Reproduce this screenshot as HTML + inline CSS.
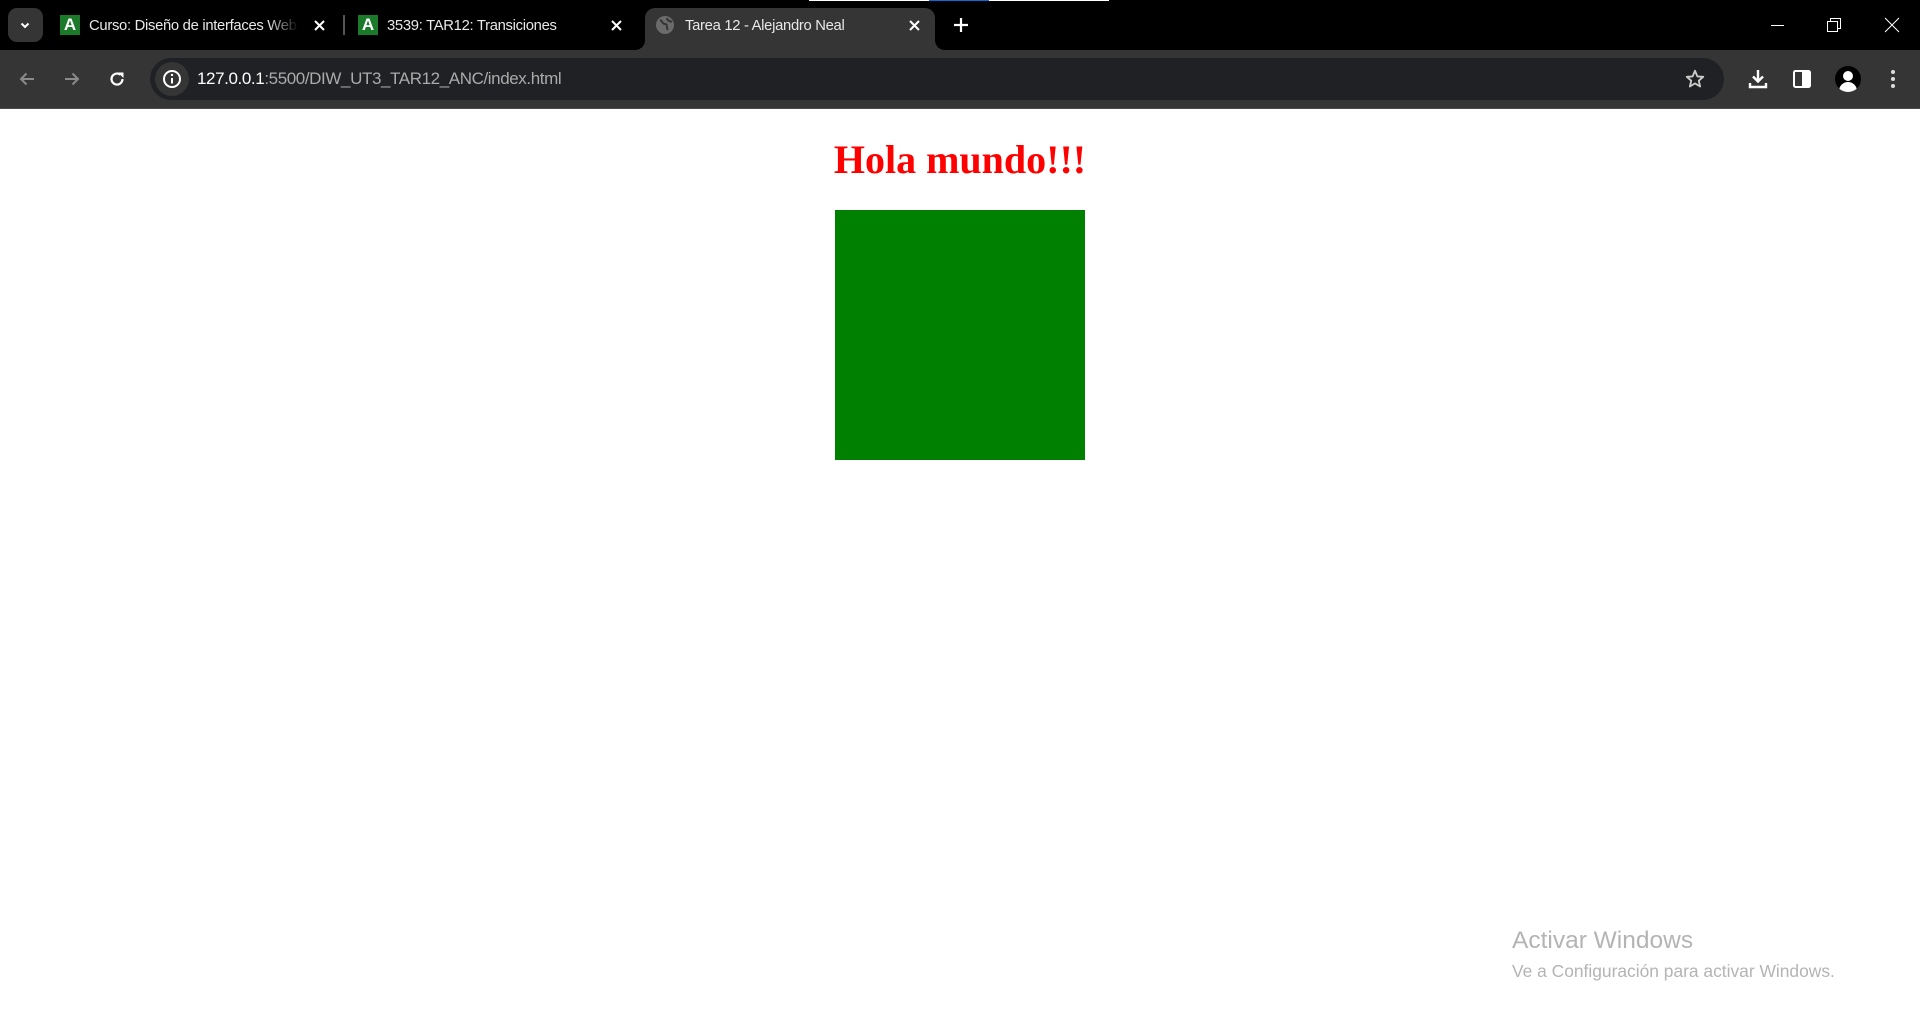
<!DOCTYPE html>
<html><head><meta charset="utf-8"><style>
*{margin:0;padding:0;box-sizing:border-box}
body{width:1920px;height:1030px;overflow:hidden;background:#fff;position:relative;font-family:"Segoe UI","Liberation Sans",sans-serif}
.abs{position:absolute}
.tabstrip{left:0;top:0;width:1920px;height:50px;background:#000}
.toolbar{left:0;top:50px;width:1920px;height:59px;background:#353535;border-bottom:1px solid #4a4a4a}
.tabtxt{color:#e8e8e8;font-size:14.8px;white-space:nowrap;top:18px;font-family:"Liberation Sans",sans-serif;letter-spacing:-0.3px}
.fav{width:20px;height:20px;background:#1a7a2a;top:15px;color:#fff;font-weight:bold;font-size:17px;line-height:20px;text-align:center;font-family:"Liberation Sans",sans-serif}
</style></head><body>
<div class="abs tabstrip"></div>
<div class="abs" style="left:809px;top:0;width:300px;height:1px;background:#fff"></div>
<div class="abs" style="left:929px;top:0;width:60px;height:1px;background:#0a6cd6"></div>
<div class="abs" style="left:8px;top:8px;width:35px;height:34px;border-radius:9px;background:#353535"></div>
<svg class="abs" style="left:19px;top:19px" width="12" height="12" viewBox="0 0 12 12"><path d="M2.5 4.5L6 8L9.5 4.5" stroke="#fff" stroke-width="2" fill="none"/></svg>
<div class="abs fav" style="left:60px">A</div>
<div class="abs tabtxt" style="left:89px;width:210px;overflow:hidden;-webkit-mask-image:linear-gradient(90deg,#000 85%,transparent)">Curso: Diseño de interfaces Web</div>
<svg class="abs" style="left:313px;top:19px" width="13" height="13"><path d="M2 2L11 11M11 2L2 11" stroke="#fff" stroke-width="2"/></svg>
<div class="abs" style="left:343px;top:15px;width:2px;height:20px;background:#555"></div>
<div class="abs fav" style="left:358px">A</div>
<div class="abs tabtxt" style="left:387px">3539: TAR12: Transiciones</div>
<svg class="abs" style="left:610px;top:19px" width="13" height="13"><path d="M2 2L11 11M11 2L2 11" stroke="#fff" stroke-width="2"/></svg>
<div class="abs" style="left:645px;top:8px;width:290px;height:44px;background:#353535;border-radius:10px 10px 0 0"></div>
<div class="abs" style="left:635px;top:40px;width:10px;height:10px;background:radial-gradient(circle at 0 0,transparent 10px,#353535 10px)"></div>
<div class="abs" style="left:935px;top:40px;width:10px;height:10px;background:radial-gradient(circle at 100% 0,transparent 10px,#353535 10px)"></div>
<svg class="abs" style="left:655px;top:15px" width="20" height="20" viewBox="0 0 20 20"><circle cx="10" cy="10" r="9" fill="#6b6b6b"/><path d="M5 5c3 1 2 4 5 4s1 4 3 6M12 3c0 3 3 3 5 4" stroke="#353535" stroke-width="2" fill="none"/></svg>
<div class="abs tabtxt" style="left:685px">Tarea 12 - Alejandro Neal</div>
<svg class="abs" style="left:908px;top:19px" width="13" height="13"><path d="M2 2L11 11M11 2L2 11" stroke="#fff" stroke-width="2"/></svg>
<svg class="abs" style="left:952px;top:16px" width="18" height="18"><path d="M9 2V16M2 9H16" stroke="#fff" stroke-width="2.2"/></svg>
<svg class="abs" style="left:1770px;top:18px" width="16" height="16"><path d="M1 7.5H14" stroke="#fff" stroke-width="1"/></svg>
<svg class="abs" style="left:1826px;top:17px" width="16" height="16"><rect x="1.5" y="4.5" width="10" height="10" stroke="#fff" fill="none"/><path d="M4.5 4.5V1.5H14.5V11.5H11.5" stroke="#fff" fill="none"/></svg>
<svg class="abs" style="left:1884px;top:17px" width="16" height="16"><path d="M1 1L15 15M15 1L1 15" stroke="#fff" stroke-width="1"/></svg>

<div class="abs toolbar"></div>
<svg class="abs" style="left:17px;top:69px" width="20" height="20" viewBox="0 0 20 20"><path d="M17 10H4M9.5 4.5L4 10L9.5 15.5" stroke="#8a8a8a" stroke-width="2" fill="none"/></svg>
<svg class="abs" style="left:62px;top:69px" width="20" height="20" viewBox="0 0 20 20"><path d="M3 10H16M10.5 4.5L16 10L10.5 15.5" stroke="#8a8a8a" stroke-width="2" fill="none"/></svg>
<svg class="abs" style="left:107px;top:69px" width="20" height="20" viewBox="0 0 20 20"><path d="M15.5 10A5.5 5.5 0 1 1 13.5 5.8" stroke="#fff" stroke-width="2.2" fill="none"/><path d="M11 3.5H16.5V9Z" fill="#fff"/></svg>
<div class="abs" style="left:150px;top:58px;width:1574px;height:42px;border-radius:21px;background:#202124"></div>
<div class="abs" style="left:155px;top:62px;width:34px;height:34px;border-radius:17px;background:#353535"></div>
<svg class="abs" style="left:161px;top:68px" width="22" height="22" viewBox="0 0 22 22"><circle cx="11" cy="11" r="8" stroke="#fff" stroke-width="2" fill="none"/><path d="M11 10V15.5" stroke="#fff" stroke-width="2"/><circle cx="11" cy="7" r="1.2" fill="#fff"/></svg>
<div class="abs" style="left:197px;top:69px;font-size:17px;color:#aaa;font-family:'Liberation Sans',sans-serif;letter-spacing:-0.4px;white-space:nowrap"><span style="color:#fff">127.0.0.1</span>:5500/DIW_UT3_TAR12_ANC/index.html</div>
<svg class="abs" style="left:1684px;top:68px" width="22" height="22" viewBox="0 0 24 24"><path d="M12 3L14.6 9.2L21 9.6L16.1 13.8L17.6 20.2L12 16.8L6.4 20.2L7.9 13.8L3 9.6L9.4 9.2Z" stroke="#ccc" stroke-width="2" fill="none" stroke-linejoin="round"/></svg>
<svg class="abs" style="left:1746px;top:67px" width="24" height="24" viewBox="0 0 24 24"><path d="M12 3V14M7 9.5L12 14.5L17 9.5" stroke="#fff" stroke-width="2.4" fill="none"/><path d="M4 16V20H20V16" stroke="#fff" stroke-width="2.4" fill="none"/></svg>
<svg class="abs" style="left:1792px;top:69px" width="20" height="20" viewBox="0 0 20 20"><rect x="2" y="2" width="16" height="16" rx="1.5" stroke="#fff" stroke-width="2" fill="none"/><rect x="10" y="2" width="8" height="16" fill="#fff"/></svg>
<div class="abs" style="left:1835px;top:66px;width:26px;height:26px;border-radius:13px;background:#000;overflow:hidden"><div class="abs" style="left:8px;top:5px;width:10px;height:10px;border-radius:5px;background:#fff"></div><div class="abs" style="left:4px;top:16px;width:18px;height:12px;border-radius:9px 9px 0 0;background:#fff"></div></div>
<svg class="abs" style="left:1887px;top:69px" width="12" height="20"><circle cx="6" cy="3" r="2" fill="#ddd"/><circle cx="6" cy="10" r="2" fill="#ddd"/><circle cx="6" cy="17" r="2" fill="#ddd"/></svg>

<div class="abs" style="left:0;top:137px;width:1920px;text-align:center;font-family:'Liberation Serif',serif;font-weight:bold;font-size:40px;color:#f00;line-height:46px">Hola mundo!!!</div>
<div class="abs" style="left:835px;top:210px;width:250px;height:250px;background:#008000"></div>

<div class="abs" style="left:1512px;top:927px;font-size:24.5px;color:#b4b4b4;font-family:'Liberation Sans',sans-serif;white-space:nowrap">Activar Windows</div>
<div class="abs" style="left:1512px;top:961px;font-size:17.4px;color:#b4b4b4;font-family:'Liberation Sans',sans-serif;white-space:nowrap">Ve a Configuración para activar Windows.</div>
</body></html>
